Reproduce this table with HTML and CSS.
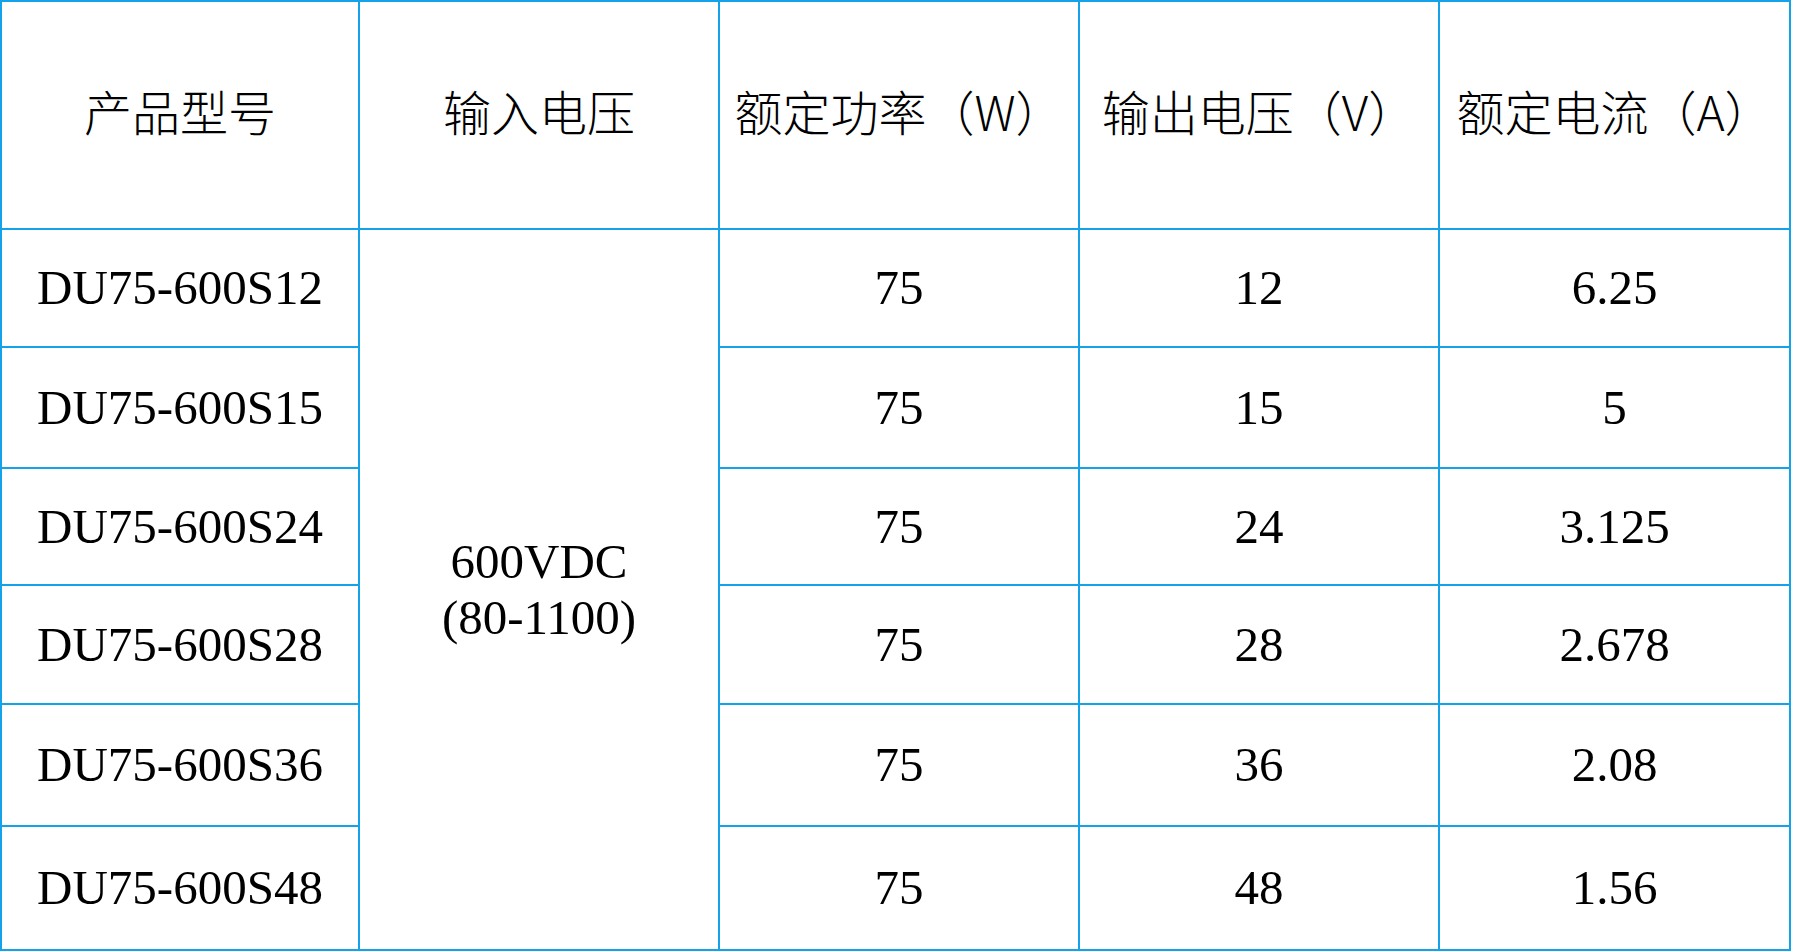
FILE: index.html
```html
<!DOCTYPE html>
<html lang="zh-CN">
<head>
<meta charset="utf-8">
<title>DU75-600S</title>
<link rel="stylesheet" href="styles.css">
</head>
<body>
<table class="spec">
  <colgroup>
    <col class="c1"><col class="c2"><col class="c3"><col class="c4"><col class="c5">
  </colgroup>
  <thead>
    <tr class="head">
      <th>产品型号</th>
      <th>输入电压</th>
      <th>额定功率（W）</th>
      <th>输出电压（V）</th>
      <th>额定电流（A）</th>
    </tr>
  </thead>
  <tbody>
    <tr class="r1">
      <td>DU75-600S12</td>
      <td rowspan="6" class="input">600VDC<br>(80-1100)</td>
      <td>75</td><td>12</td><td>6.25</td>
    </tr>
    <tr class="r2"><td>DU75-600S15</td><td>75</td><td>15</td><td>5</td></tr>
    <tr class="r3"><td>DU75-600S24</td><td>75</td><td>24</td><td>3.125</td></tr>
    <tr class="r4"><td>DU75-600S28</td><td>75</td><td>28</td><td>2.678</td></tr>
    <tr class="r5"><td>DU75-600S36</td><td>75</td><td>36</td><td>2.08</td></tr>
    <tr class="r6"><td>DU75-600S48</td><td>75</td><td>48</td><td>1.56</td></tr>
  </tbody>
</table>
</body>
</html>
```
FILE: styles.css
```css
html, body {
  margin: 0;
  padding: 0;
  background: #ffffff;
}

.spec {
  border-collapse: collapse;
  table-layout: fixed;
  width: 1791px;
  font-family: "Liberation Serif", "Noto Sans CJK SC", serif;
  font-size: 49px;
  color: #000000;
}

.spec .c1 { width: 358px; }
.spec .c2 { width: 360px; }
.spec .c3 { width: 360px; }
.spec .c4 { width: 360px; }
.spec .c5 { width: 351px; }

.spec th,
.spec td {
  border: 2px solid #14a2e8;
  padding: 0;
  text-align: center;
  vertical-align: middle;
  font-weight: normal;
  line-height: 56px;
  white-space: nowrap;
}

.spec th {
  font-family: "Noto Sans CJK SC", sans-serif;
  font-weight: 300;
  font-size: 48px;
  padding-bottom: 10px;
}

.spec .head { height: 228px; }
.spec .r1 { height: 118px; }
.spec .r2 { height: 121px; }
.spec .r3 { height: 117px; }
.spec .r4 { height: 119px; }
.spec .r5 { height: 122px; }
.spec .r6 { height: 124px; }

.spec .input {
  line-height: 56px;
}
```
